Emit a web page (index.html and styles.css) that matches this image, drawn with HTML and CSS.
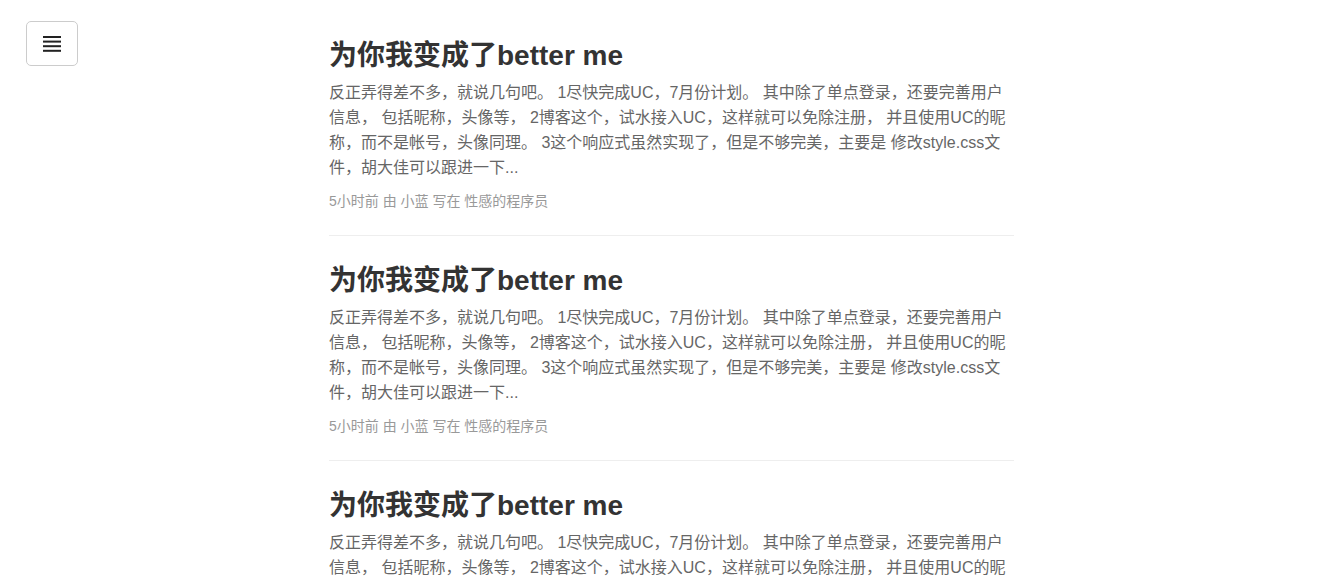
FILE: index.html
```html
<!DOCTYPE html>
<html lang="zh-CN">
<head>
<meta charset="utf-8">
<title>better me</title>
<link rel="stylesheet" href="styles.css">
</head>
<body>
<button class="menu-toggle" type="button" aria-label="menu">
  <svg width="18" height="16" viewBox="0 0 18 16" aria-hidden="true">
    <rect x="0" y="0" width="18" height="2" fill="#222"/>
    <rect x="0" y="4.6" width="18" height="2" fill="#222"/>
    <rect x="0" y="9.2" width="18" height="2" fill="#222"/>
    <rect x="0" y="13.8" width="18" height="2" fill="#222"/>
  </svg>
</button>
<main class="posts">
  <article class="post">
    <h2 class="post-title">为你我变成了better me</h2>
    <p class="post-excerpt">反正弄得差不多，就说几句吧。 1尽快完成UC，7月份计划。 其中除了单点登录，还要完善用户信息， 包括昵称，头像等， 2博客这个，试水接入UC，这样就可以免除注册， 并且使用UC的昵称，而不是帐号，头像同理。 3这个响应式虽然实现了，但是不够完美，主要是 修改style.css文件，胡大佳可以跟进一下...</p>
    <div class="post-meta">5小时前 由 小蓝 写在 性感的程序员</div>
  </article>
  <article class="post">
    <h2 class="post-title">为你我变成了better me</h2>
    <p class="post-excerpt">反正弄得差不多，就说几句吧。 1尽快完成UC，7月份计划。 其中除了单点登录，还要完善用户信息， 包括昵称，头像等， 2博客这个，试水接入UC，这样就可以免除注册， 并且使用UC的昵称，而不是帐号，头像同理。 3这个响应式虽然实现了，但是不够完美，主要是 修改style.css文件，胡大佳可以跟进一下...</p>
    <div class="post-meta">5小时前 由 小蓝 写在 性感的程序员</div>
  </article>
  <article class="post">
    <h2 class="post-title">为你我变成了better me</h2>
    <p class="post-excerpt">反正弄得差不多，就说几句吧。 1尽快完成UC，7月份计划。 其中除了单点登录，还要完善用户信息， 包括昵称，头像等， 2博客这个，试水接入UC，这样就可以免除注册， 并且使用UC的昵称，而不是帐号，头像同理。 3这个响应式虽然实现了，但是不够完美，主要是 修改style.css文件，胡大佳可以跟进一下...</p>
    <div class="post-meta">5小时前 由 小蓝 写在 性感的程序员</div>
  </article>
</main>
</body>
</html>
```
FILE: styles.css
```css
html, body {
  margin: 0;
  padding: 0;
  background: #fff;
}

body {
  font-family: "Liberation Sans", "Noto Sans CJK SC", sans-serif;
  color: #333;
}

.menu-toggle {
  position: fixed;
  left: 26px;
  top: 21px;
  width: 52px;
  height: 45px;
  padding: 0;
  display: flex;
  align-items: center;
  justify-content: center;
  background: #fff;
  border: 1px solid #ccc;
  border-radius: 5px;
  cursor: pointer;
}

.posts {
  width: 685px;
  margin-left: 329px;
  padding-top: 40px;
}

.post {
  padding-bottom: 24px;
  border-bottom: 1px solid #eee;
  margin-bottom: 29px;
}

.post-title {
  margin: 0 0 9px;
  font-size: 28px;
  line-height: 31px;
  font-weight: bold;
  color: #333;
}

.post-excerpt {
  margin: 0 0 11px;
  font-size: 16px;
  line-height: 25px;
  color: #666;
}

.post-meta {
  font-size: 14px;
  line-height: 20px;
  color: #999;
}
```
